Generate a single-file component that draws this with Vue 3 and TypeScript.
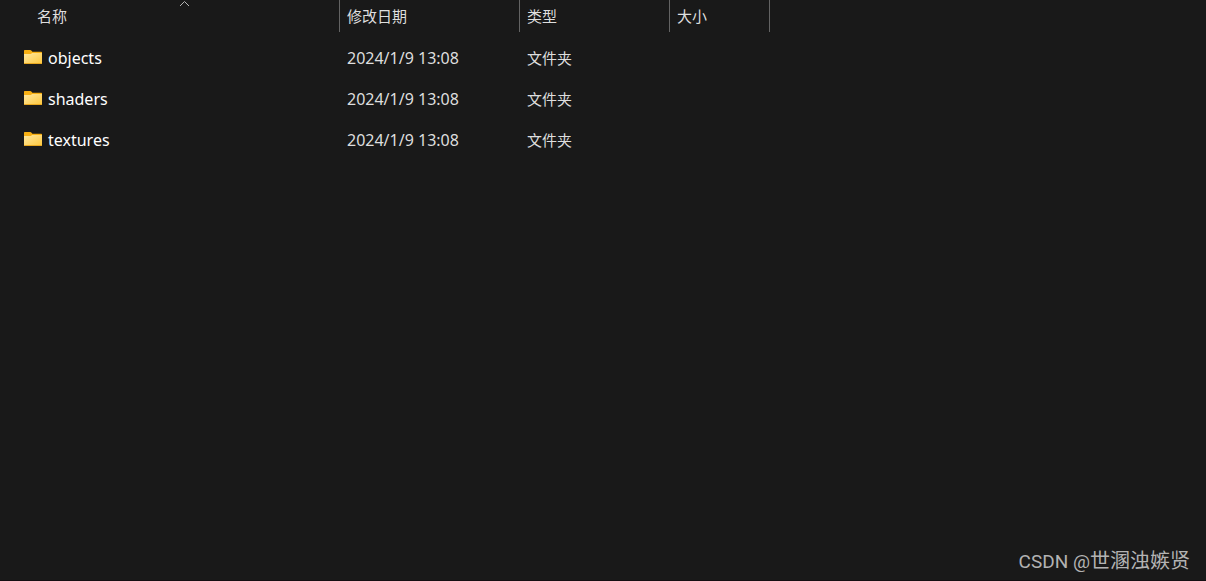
<script setup lang="ts">
interface Entry {
  name: string
  modified: string
  kind: string
  size: string
}

const entries: Entry[] = [
  { name: 'objects', modified: '2024/1/9 13:08', kind: '文件夹', size: '' },
  { name: 'shaders', modified: '2024/1/9 13:08', kind: '文件夹', size: '' },
  { name: 'textures', modified: '2024/1/9 13:08', kind: '文件夹', size: '' },
]
</script>

<template>
  <main class="explorer">
    <table class="files">
      <colgroup>
        <col class="col-name" />
        <col class="col-date" />
        <col class="col-kind" />
        <col class="col-size" />
      </colgroup>
      <thead>
        <tr>
          <th scope="col" class="name-head" aria-sort="ascending">
            <button type="button">名称</button>
            <svg class="sort" width="11" height="7" viewBox="0 0 11 7" aria-hidden="true">
              <path d="M1 6 5.5 1.5 10 6" fill="none" stroke="#b4b4b4" stroke-width="1" />
            </svg>
          </th>
          <th scope="col"><button type="button">修改日期</button></th>
          <th scope="col"><button type="button">类型</button></th>
          <th scope="col"><button type="button">大小</button></th>
        </tr>
      </thead>
      <tbody>
        <tr v-for="entry in entries" :key="entry.name">
          <td class="name">
            <div class="label">
              <svg class="folder" width="18" height="16" viewBox="0 0 18 16" aria-hidden="true">
                <defs>
                  <linearGradient :id="'face-' + entry.name" x1="0" y1="0" x2="1" y2="1">
                    <stop offset="0" stop-color="#ffe8a0" />
                    <stop offset="1" stop-color="#fdc73c" />
                  </linearGradient>
                </defs>
                <path d="M0 .7Q0 0 .7 0H6.2Q6.8 0 7.3.6L8.4 1.7H17.3Q18 1.7 18 2.4V7H0Z" fill="#f8b013" />
                <path d="M0 4H6.3Q7 4 7.5 3.5L8 3H18V13.3Q18 14 17.3 14H.7Q0 14 0 13.3Z" :fill="'url(#face-' + entry.name + ')'" />
                <path d="M0 13H18V13.3Q18 14 17.3 14H.7Q0 14 0 13.3Z" fill="#e9a820" />
              </svg>
              <span>{{ entry.name }}</span>
            </div>
          </td>
          <td class="date">{{ entry.modified }}</td>
          <td>{{ entry.kind }}</td>
          <td>{{ entry.size }}</td>
        </tr>
      </tbody>
    </table>
    <footer class="watermark"><span class="site">CSDN @</span>世溷浊嫉贤</footer>
  </main>
</template>

<style>
body {
  background: #191919;
}
</style>

<style scoped>
.explorer {
  box-sizing: border-box;
  min-height: 100vh;
  display: flex;
  flex-direction: column;
  justify-content: space-between;
  border-bottom: 1px solid #140f12;
  background: #191919;
  color: #dedede;
  font-family: "Noto Sans", "Noto Sans CJK SC", sans-serif;
  font-size: 15px;
  line-height: 20px;
}

.files {
  align-self: flex-start;
  table-layout: fixed;
  width: 770px;
  max-width: 100%;
  border-collapse: separate;
  border-spacing: 0;
}

.col-name { width: 340px; }
.col-date { width: 180px; }
.col-kind { width: 150px; }
.col-size { width: 100px; }

th {
  position: relative;
  box-sizing: border-box;
  height: 32px;
  padding: 0 7px;
  border-right: 1px solid #636363;
  text-align: left;
  font-weight: 400;
  vertical-align: middle;
}

.name-head {
  padding-left: 37px;
}

th button {
  display: block;
  padding: 0;
  border: 0;
  background: none;
  color: inherit;
  font: inherit;
}

.sort {
  position: absolute;
  top: 0;
  left: 179px;
}

td {
  height: 41px;
  padding: 0 7px;
  vertical-align: middle;
}

tbody::before {
  content: "";
  display: table-row;
  height: 5px;
}

.name {
  padding-left: 24px;
  color: #ffffff;
}

.label {
  display: flex;
  align-items: center;
  gap: 6px;
  font-size: 16px;
}

.folder {
  flex: none;
}

.date {
  font-size: 16px;
}

.watermark {
  align-self: flex-end;
  padding: 0 16px 6px;
  color: #b3b3b3;
  font-family: Roboto, "Noto Sans CJK SC", sans-serif;
  font-size: 20px;
  line-height: 24px;
}

.site {
  font-size: 19px;
}
</style>
